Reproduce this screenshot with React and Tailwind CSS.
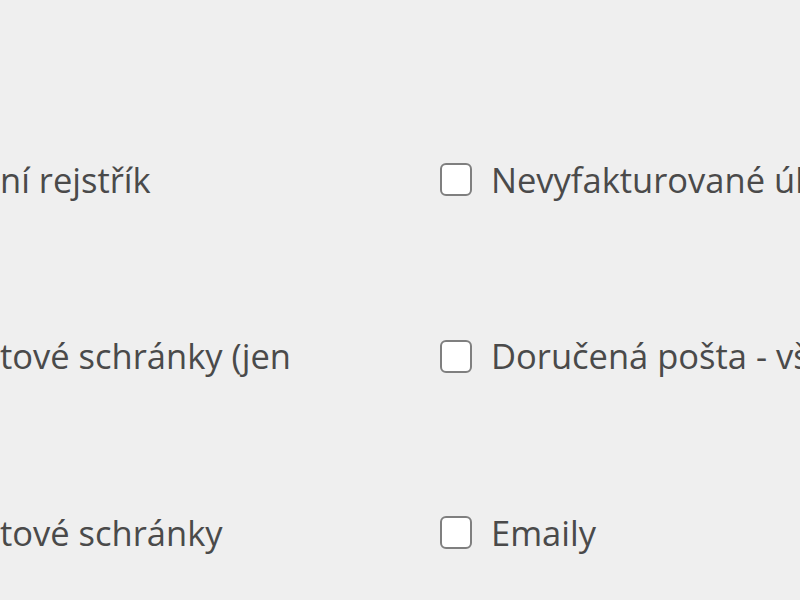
import React from 'react';

const rows = [
  { leftHidden: 'Obchod', left: 'ní rejstřík', right: 'Nevyfakturované úkony' },
  { leftHidden: 'Da', left: 'tové schránky (jen', right: 'Doručená pošta - všechny' },
  { leftHidden: 'Da', left: 'tové schránky', right: 'Emaily' },
];

const Checkbox = () => (
  <span className="block w-[32px] h-[33px] shrink-0 rounded-[6px] border-[2.5px] border-[#7f7f7f] bg-white" />
);

export default function App() {
  return (
    <div
      className="w-[800px] h-[600px] overflow-hidden bg-[#efefef] text-[#4a4a4a] text-[34.5px] pt-[163px]"
      style={{ fontFamily: '"Open Sans", sans-serif' }}
    >
      {rows.map((row, i) => (
        <div key={i} className="flex h-[176.5px] items-start">
          <div className="flex w-[440px] shrink-0 h-[33px] items-center whitespace-nowrap">
            <div className="flex w-0 justify-end">
              <div className="flex shrink-0 items-center gap-[19px]">
                <Checkbox />
                <span>{row.leftHidden}</span>
              </div>
            </div>
            <span>{row.left}</span>
          </div>
          <label className="flex h-[33px] items-center gap-[19px] whitespace-nowrap">
            <Checkbox />
            <span>{row.right}</span>
          </label>
        </div>
      ))}
    </div>
  );
}
